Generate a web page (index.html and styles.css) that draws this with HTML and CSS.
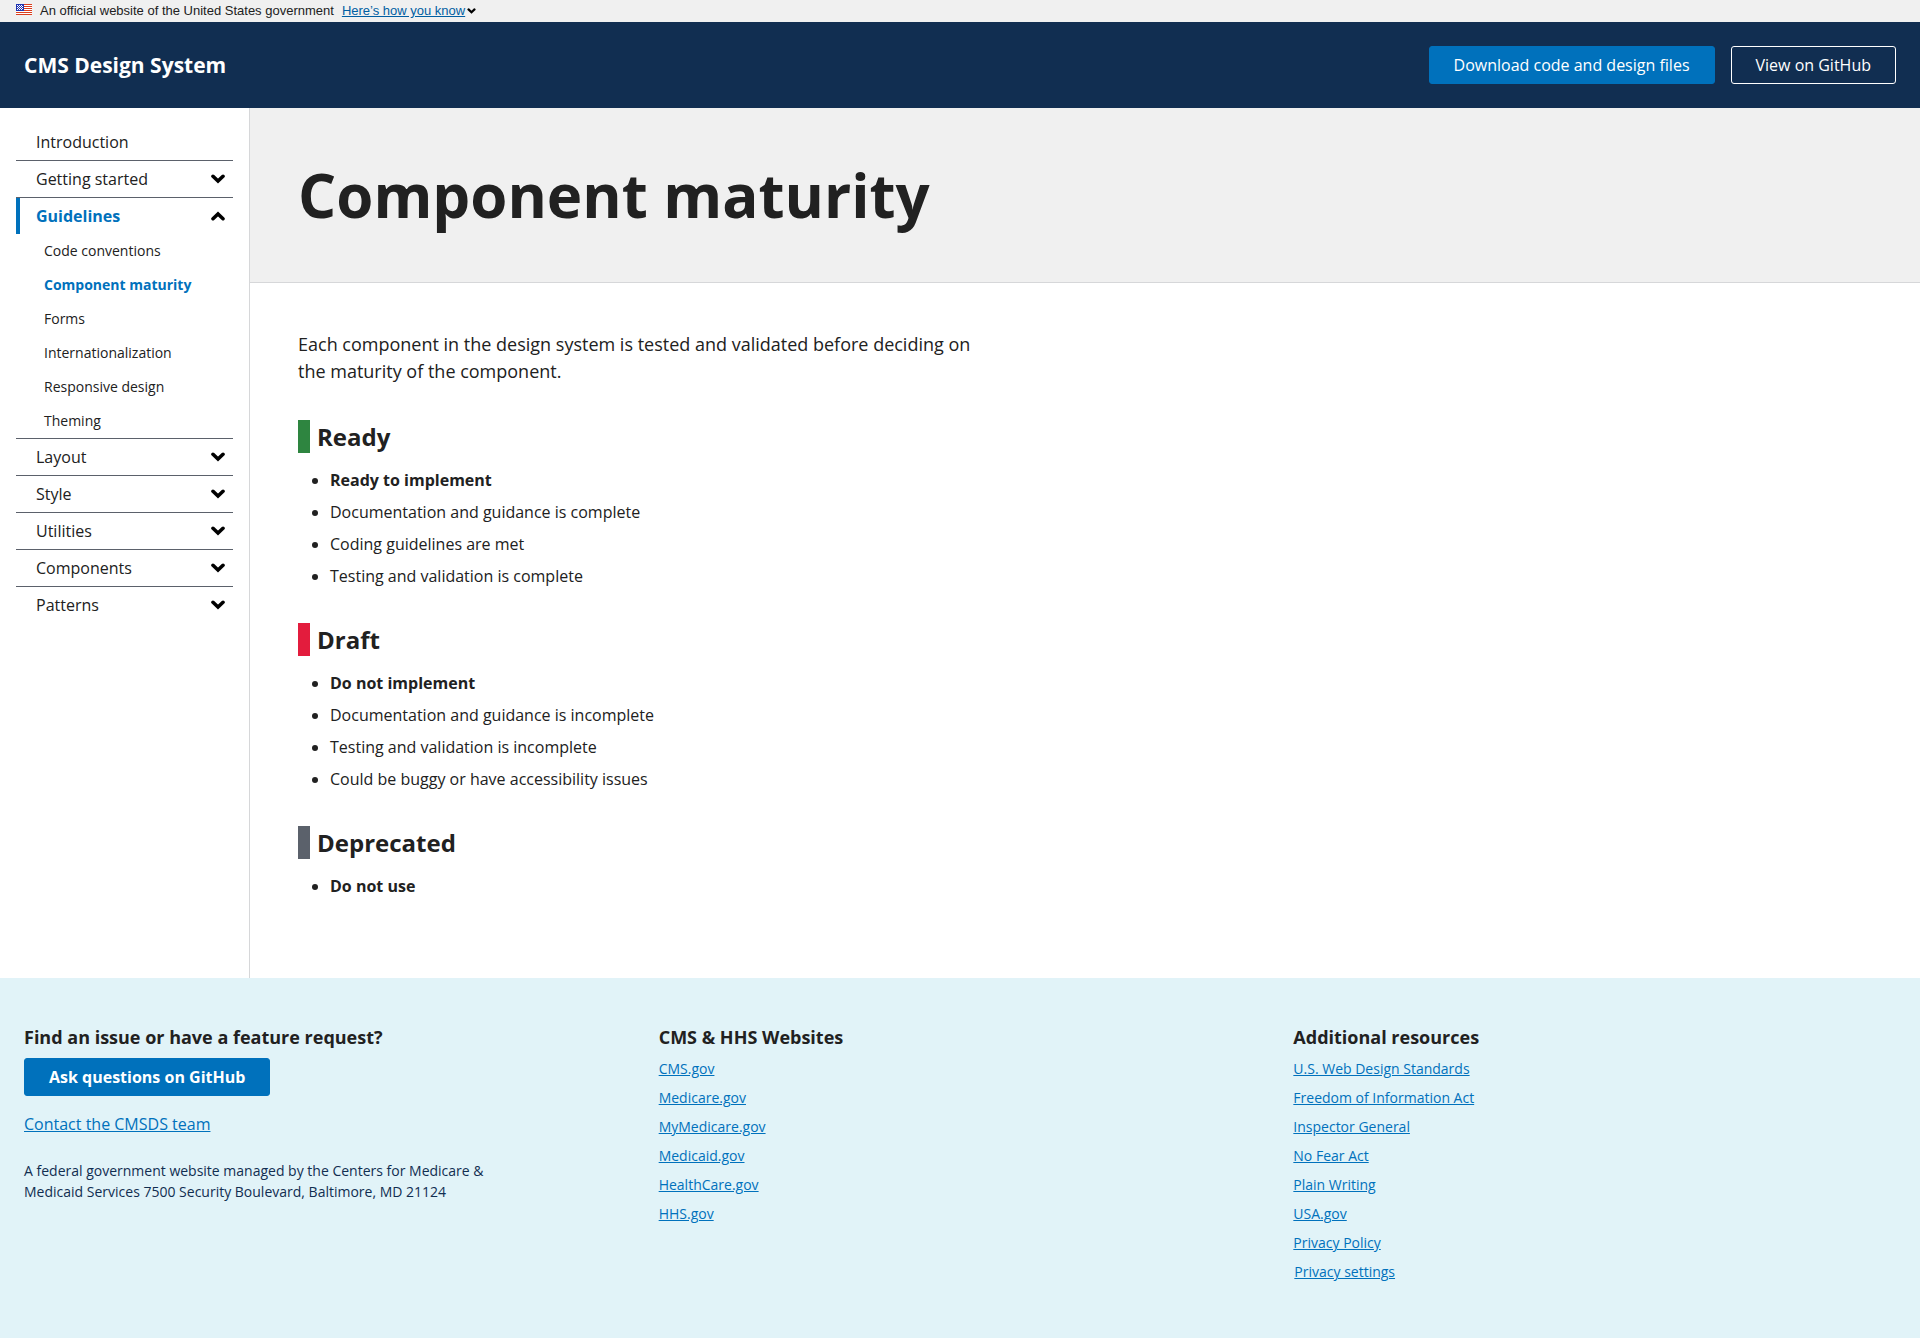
FILE: index.html
```html
<!DOCTYPE html>
<html lang="en">
<head>
<meta charset="utf-8">
<meta name="viewport" content="width=device-width, initial-scale=1">
<title>Component maturity - CMS Design System</title>
<link rel="stylesheet" href="styles.css">
</head>
<body>
<svg class="sprite" aria-hidden="true">
  <symbol id="chevron" viewBox="0 0 14 10"><path d="M2 2.3 7 7 12 2.3" fill="none" stroke="currentColor" stroke-width="3.6" stroke-linecap="round"/></symbol>
</svg>

<section class="banner" aria-label="Official government website">
  <svg class="banner__flag" viewBox="0 0 16 11" shape-rendering="crispEdges" aria-hidden="true">
    <path fill="#fff" d="M0 0h16v11H0z"/>
    <path fill="#db3e1f" d="M8 0h8v1H8zM8 2h8v1H8zM8 4h8v1H8zM8 6h8v1H8zM0 8h16v1H0zM0 10h16v1H0z"/>
    <path fill="#1e33b1" d="M0 0h8v7H0z"/>
    <path fill="#fff" d="M1 1h1v1H1zM3 1h1v1H3zM5 1h1v1H5zM2 2h1v1H2zM4 2h1v1H4zM6 2h1v1H6zM1 3h1v1H1zM3 3h1v1H3zM5 3h1v1H5zM2 4h1v1H2zM4 4h1v1H4zM6 4h1v1H6zM1 5h1v1H1zM3 5h1v1H3zM5 5h1v1H5z"/>
  </svg>
  <span>An official website of the United States government</span>
  <button class="banner__toggle" type="button" aria-expanded="false"><span class="banner__action">Here’s how you know</span><svg class="banner__chevron" aria-hidden="true"><use href="#chevron"/></svg></button>
</section>

<header class="header">
  <a class="header__title" href="#">CMS Design System</a>
  <div class="header__actions">
    <a class="button button--solid" href="#">Download code and design files</a>
    <a class="button button--outline" href="#">View on GitHub</a>
  </div>
</header>

<div class="layout">
  <nav class="sidebar" aria-label="Main">
    <ul class="nav">
      <li class="nav__item"><a class="nav__link" href="#">Introduction</a></li>
      <li class="nav__item"><button class="nav__link" type="button">Getting started<svg class="nav__chevron" aria-hidden="true"><use href="#chevron"/></svg></button></li>
      <li class="nav__item">
        <button class="nav__link nav__link--current" type="button" aria-expanded="true">Guidelines<svg class="nav__chevron nav__chevron--up" aria-hidden="true"><use href="#chevron"/></svg></button>
        <ul class="subnav">
          <li><a class="subnav__link" href="#">Code conventions</a></li>
          <li><a class="subnav__link subnav__link--current" href="#" aria-current="page">Component maturity</a></li>
          <li><a class="subnav__link" href="#">Forms</a></li>
          <li><a class="subnav__link" href="#">Internationalization</a></li>
          <li><a class="subnav__link" href="#">Responsive design</a></li>
          <li><a class="subnav__link" href="#">Theming</a></li>
        </ul>
      </li>
      <li class="nav__item"><button class="nav__link" type="button">Layout<svg class="nav__chevron" aria-hidden="true"><use href="#chevron"/></svg></button></li>
      <li class="nav__item"><button class="nav__link" type="button">Style<svg class="nav__chevron" aria-hidden="true"><use href="#chevron"/></svg></button></li>
      <li class="nav__item"><button class="nav__link" type="button">Utilities<svg class="nav__chevron" aria-hidden="true"><use href="#chevron"/></svg></button></li>
      <li class="nav__item"><button class="nav__link" type="button">Components<svg class="nav__chevron" aria-hidden="true"><use href="#chevron"/></svg></button></li>
      <li class="nav__item"><button class="nav__link" type="button">Patterns<svg class="nav__chevron" aria-hidden="true"><use href="#chevron"/></svg></button></li>
    </ul>
  </nav>

  <main class="main">
    <div class="page-header"><h1 class="page-header__title">Component maturity</h1></div>
    <article class="content">
      <p class="lead">Each component in the design system is tested and validated before deciding on the maturity of the component.</p>
      <section class="status">
        <h2 class="status__title status__title--ready">Ready</h2>
        <ul class="status__list">
          <li><strong>Ready to implement</strong></li>
          <li>Documentation and guidance is complete</li>
          <li>Coding guidelines are met</li>
          <li>Testing and validation is complete</li>
        </ul>
      </section>
      <section class="status">
        <h2 class="status__title status__title--draft">Draft</h2>
        <ul class="status__list">
          <li><strong>Do not implement</strong></li>
          <li>Documentation and guidance is incomplete</li>
          <li>Testing and validation is incomplete</li>
          <li>Could be buggy or have accessibility issues</li>
        </ul>
      </section>
      <section class="status">
        <h2 class="status__title status__title--deprecated">Deprecated</h2>
        <ul class="status__list">
          <li><strong>Do not use</strong></li>
        </ul>
      </section>
    </article>
  </main>
</div>

<footer class="footer">
  <section>
    <h2 class="footer__title">Find an issue or have a feature request?</h2>
    <a class="button button--solid button--bold" href="#">Ask questions on GitHub</a>
    <p class="footer__contact"><a class="link" href="#">Contact the CMSDS team</a></p>
    <p class="footer__address">A federal government website managed by the Centers for Medicare &amp; Medicaid Services 7500 Security Boulevard, Baltimore, MD 21124</p>
  </section>
  <section>
    <h2 class="footer__title">CMS &amp; HHS Websites</h2>
    <ul class="footer__links">
      <li><a class="link" href="#">CMS.gov</a></li>
      <li><a class="link" href="#">Medicare.gov</a></li>
      <li><a class="link" href="#">MyMedicare.gov</a></li>
      <li><a class="link" href="#">Medicaid.gov</a></li>
      <li><a class="link" href="#">HealthCare.gov</a></li>
      <li><a class="link" href="#">HHS.gov</a></li>
    </ul>
  </section>
  <section>
    <h2 class="footer__title">Additional resources</h2>
    <ul class="footer__links">
      <li><a class="link" href="#">U.S. Web Design Standards</a></li>
      <li><a class="link" href="#">Freedom of Information Act</a></li>
      <li><a class="link" href="#">Inspector General</a></li>
      <li><a class="link" href="#">No Fear Act</a></li>
      <li><a class="link" href="#">Plain Writing</a></li>
      <li><a class="link" href="#">USA.gov</a></li>
      <li><a class="link" href="#">Privacy Policy</a></li>
      <li><button class="link link--button" type="button">Privacy settings</button></li>
    </ul>
  </section>
</footer>
</body>
</html>
```
FILE: styles.css
```css
:root {
  --ink: #212121;
  --navy: #112e51;
  --blue: #0071bc;
  --gray: #5b616b;
  --gray-line: #d6d7d9;
  --gray-pale: #f0f0f0;
  --blue-pale: #e1f3f8;
}

*, *::before, *::after { box-sizing: border-box; }

body {
  display: flex;
  flex-direction: column;
  min-height: 100vh;
  margin: 0;
  background: #fff;
  color: var(--ink);
  font: 16px/24px "Open Sans", sans-serif;
}

h1, h2, p, ul { margin: 0; }

button { font: inherit; cursor: pointer; }

.sprite { position: absolute; width: 0; height: 0; }

/* Government banner */
.banner {
  display: flex;
  align-items: center;
  padding: 0 16px;
  gap: 8px;
  background: var(--gray-pale);
  font: 13px/22px "Liberation Sans", Arial, sans-serif;
}
.banner__flag { width: 16px; height: 11px; margin-bottom: 3px; }
.banner__toggle {
  display: flex;
  align-items: center;
  gap: 2px;
  padding: 0;
  border: 0;
  background: none;
  color: #000;
}
.banner__action { color: #005ea2; text-decoration: underline; }
.banner__chevron { width: 9px; height: 6px; }

/* Site header */
.header {
  display: flex;
  align-items: center;
  justify-content: space-between;
  padding: 24px;
  background: var(--navy);
}
.header__title { color: #fff; font-size: 21px; font-weight: 700; text-decoration: none; }
.header__actions { display: flex; gap: 16px; }

.button {
  display: inline-block;
  padding: 6px 24px;
  border: 1px solid var(--blue);
  border-radius: 3px;
  color: #fff;
  text-decoration: none;
  vertical-align: top;
}
.button--solid { background: var(--blue); }
.button--outline { border-color: #fff; }
.button--bold { font-weight: 700; }

/* Sidebar */
.layout { display: flex; flex: 1; }
.sidebar {
  flex: 0 0 250px;
  padding: 16px;
  border-right: 1px solid var(--gray-line);
}
.nav, .subnav { padding: 0; list-style: none; }
.nav__item + .nav__item { border-top: 1px solid var(--gray); }
.nav__link {
  display: flex;
  align-items: center;
  justify-content: space-between;
  width: 100%;
  padding: 6px 8px 6px 16px;
  border: 0;
  border-left: 4px solid transparent;
  background: none;
  color: var(--ink);
  text-decoration: none;
}
.nav__link--current { border-left-color: var(--blue); color: var(--blue); font-weight: 700; }
.nav__chevron { width: 14px; height: 10px; color: #000; }
.nav__chevron--up { transform: rotate(180deg); }
.subnav__link {
  display: block;
  padding: 6px 8px 7px 28px;
  color: var(--ink);
  font-size: 14px;
  line-height: 21px;
  text-decoration: none;
}
.subnav__link--current { color: var(--blue); font-weight: 700; }

/* Page body */
.main { flex: 1; min-width: 0; }
.page-header { padding: 48px; border-bottom: 1px solid var(--gray-line); background: var(--gray-pale); }
.page-header__title { font-size: 60px; line-height: 78px; }
.content { padding: 48px 48px 80px; }
.lead { max-width: 700px; font-size: 18px; line-height: 27px; }
.status { margin-top: 35px; }
.status__title { padding-left: 7px; border-left: 12px solid; font-size: 24px; line-height: 33px; }
.status__title--ready { border-left-color: #2e8540; }
.status__title--draft { border-left-color: #e31c3d; }
.status__title--deprecated { border-left-color: var(--gray); }
.status__list { display: grid; gap: 8px; margin-top: 15px; padding-left: 32px; }

/* Footer */
.footer {
  display: grid;
  grid-template-columns: repeat(3, 1fr);
  gap: 32px;
  padding: 48px 24px;
  background: var(--blue-pale);
}
.footer__title { margin-bottom: 10px; font-size: 18px; line-height: 22px; }
.footer__contact { margin-top: 16px; }
.footer__address { max-width: 480px; margin-top: 24px; color: var(--navy); font-size: 14px; line-height: 21px; }
.footer__links { padding: 0; list-style: none; font-size: 14px; line-height: 21px; }
.footer__links li { display: flex; margin-bottom: 8px; }
.link { color: var(--blue); text-decoration: underline; }
.link--button { padding: 0 1px; border: 0; background: none; }
```
